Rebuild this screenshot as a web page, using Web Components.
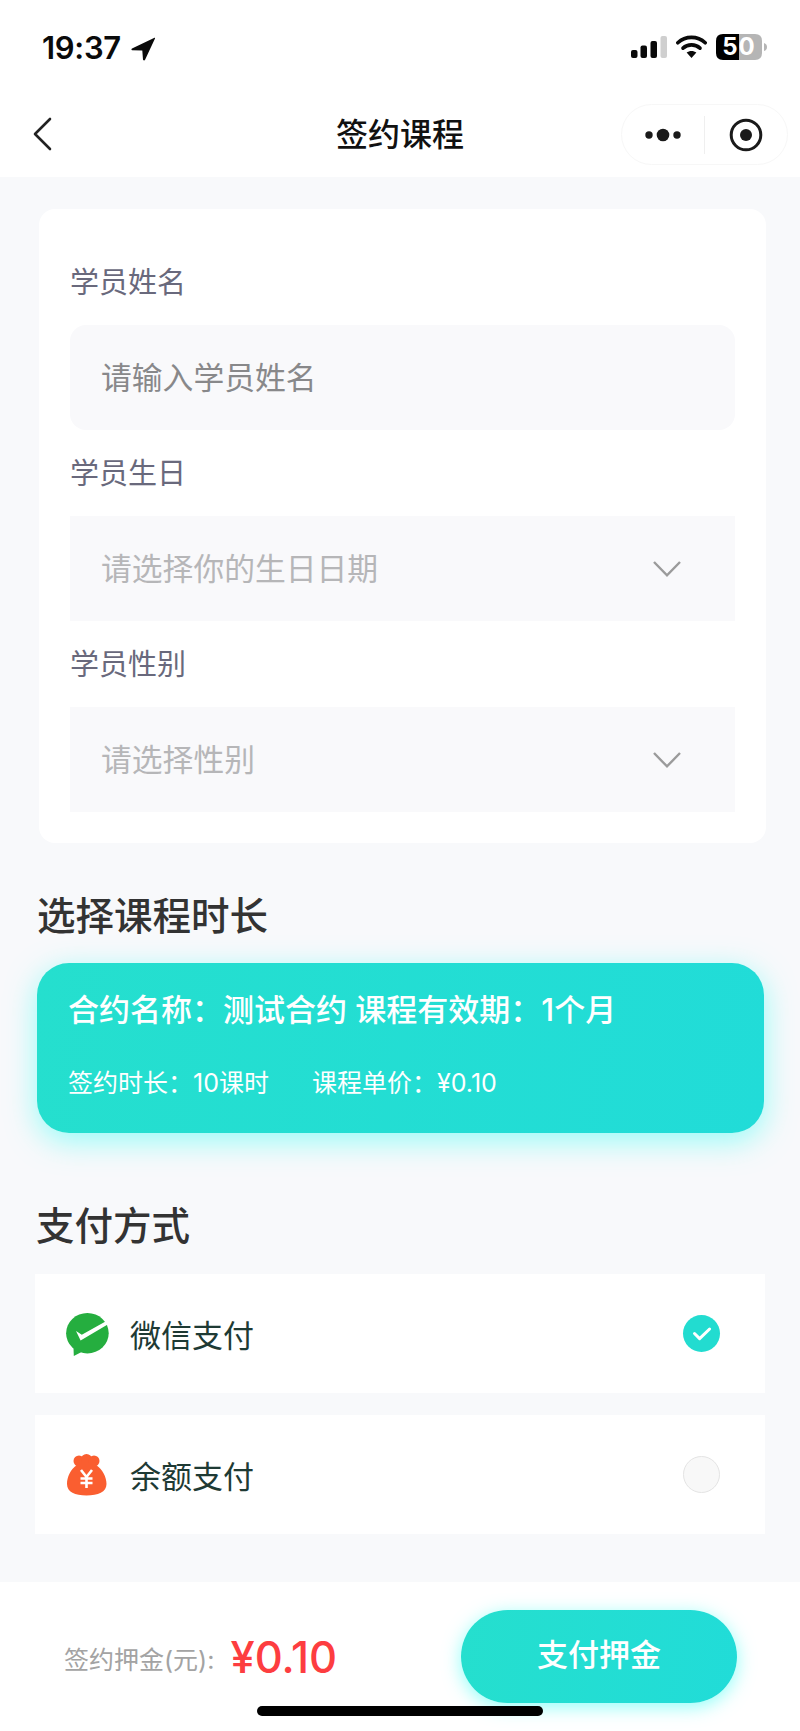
<!DOCTYPE html>
<html lang="zh-CN">
<head>
<meta charset="utf-8">
<title>签约课程</title>
<style>
  html, body { margin: 0; padding: 0; }
  body {
    width: 800px;
    height: 1731px;
    overflow: hidden;
    background: #f8f9fb;
    font-family: Inter, "Noto Sans CJK SC", sans-serif;
  }
  #page { display: flex; flex-direction: column; height: 1731px; position: relative; }
  #main { flex: 1; }
</style>
</head>
<body>
<div id="page">
  <status-bar></status-bar>
  <nav-bar>签约课程</nav-bar>
  <div id="main">
    <form-card>
      <form-field label="学员姓名" placeholder="请输入学员姓名"></form-field>
      <form-field label="学员生日" placeholder="请选择你的生日日期" select></form-field>
      <form-field label="学员性别" placeholder="请选择性别" select></form-field>
    </form-card>
    <section-title style="--top:49px;--left:37px;--bottom:29px">选择课程时长</section-title>
    <course-card name="合约名称：测试合约 课程有效期：1个月" duration="签约时长：10课时" price="课程单价：¥0.10"></course-card>
    <section-title style="--top:69px;--left:36px;--bottom:30px">支付方式</section-title>
    <pay-option icon="wechat" checked>微信支付</pay-option>
    <pay-option icon="balance">余额支付</pay-option>
  </div>
  <pay-footer></pay-footer>
  <home-bar></home-bar>
</div>

<script>
const statusTpl = document.createElement("template");
statusTpl.innerHTML = `
  <style>
    :host { display: flex; align-items: flex-start; height: 88px; background: #fff; box-sizing: border-box; padding: 33px 33px 0 42px; }
    .time { font: 600 31px/30px Inter, sans-serif; color: #0a0a0a; letter-spacing: -0.3px; }
    .loc { margin: 4px 0 0 10px; }
    .right { margin-left: auto; display: flex; align-items: flex-start; }
    .signal { margin-top: 3px; }
    .wifi { margin: 2px 0 0 9px; }
    .battery { margin: 1px 0 0 9px; width: 51px; height: 26px; position: relative; }
    .battery svg { position: absolute; left: 0; top: 0; }
    .battery span { position: absolute; left: 0; top: 0; width: 46px; height: 26px; text-align: center;
      font: 700 24px/26px Inter, sans-serif; color: #fff; letter-spacing: 1px; }
  </style>
  <span class="time">19:37</span>
  <svg class="loc" width="24" height="24" viewBox="0 0 24 24"><path d="M23.5 0.8 L1 11.6 Q-0.2 12.6 1 13.2 L11.3 13.6 L12 22.8 Q13.2 24.2 14.2 22.6 L24 1.6 Q24.2 0.4 23.5 0.8 Z" fill="#0a0a0a"/></svg>
  <div class="right">
    <svg class="signal" width="36" height="22" viewBox="0 0 36 22">
      <rect x="0" y="14" width="6.5" height="8" rx="2" fill="#0a0a0a"/>
      <rect x="9.5" y="9.5" width="6.5" height="12.5" rx="2" fill="#0a0a0a"/>
      <rect x="19.5" y="5" width="6.5" height="17" rx="2" fill="#0a0a0a"/>
      <rect x="29.5" y="0" width="6.5" height="22" rx="2" fill="#cfcfcf"/>
    </svg>
    <svg class="wifi" width="31" height="23" viewBox="0 0 31 23">
      <path d="M1.8 7.8 C9.5 0.6 21.5 0.6 29.2 7.8" fill="none" stroke="#0a0a0a" stroke-width="3.6" stroke-linecap="round"/>
      <path d="M7 13.2 C11.8 8.8 19.2 8.8 24 13.2" fill="none" stroke="#0a0a0a" stroke-width="3.6" stroke-linecap="round"/>
      <path d="M15.5 23 L10.6 17.6 C13.4 15.4 17.6 15.4 20.4 17.6 Z" fill="#0a0a0a"/>
    </svg>
    <div class="battery">
      <svg width="51" height="26" viewBox="0 0 51 26">
        <path d="M23 0 H39 Q46 0 46 7 V19 Q46 26 39 26 H23 Z" fill="#b5b5b5"/>
        <path d="M23 0 H7 Q0 0 0 7 V19 Q0 26 7 26 H23 Z" fill="#000"/>
        <path d="M48 9 Q51 10 51 13 Q51 16 48 17 Z" fill="#b5b5b5"/>
      </svg>
      <span>50</span>
    </div>
  </div>
`;
class StatusBar extends HTMLElement {
  constructor() {
    super();
    this.attachShadow({ mode: "open" });
    this.shadowRoot.appendChild(statusTpl.content.cloneNode(true));
  }
}
customElements.define("status-bar", StatusBar);

const navTpl = document.createElement("template");
navTpl.innerHTML = `
  <style>
    :host { display: flex; align-items: center; height: 89px; background: #fff; position: relative; }
    .back { margin: 2px 0 0 32px; flex: none; }
    .title { position: absolute; left: 0; right: 0; top: 26px; text-align: center; font: 500 32px/42px Inter, "Noto Sans CJK SC", sans-serif; color: #111; }
    .capsule { position: absolute; left: 621px; top: 16px; width: 167px; height: 61px; box-sizing: border-box;
      border: 1px solid #f7f7f7; border-radius: 31px; background: #fff; display: flex; align-items: center; }
    .capsule > div { flex: 1; display: flex; justify-content: center; align-items: center; }
    .line { width: 1px; height: 38px; background: #efefef; flex: none; }
  </style>
  <svg class="back" width="20" height="34" viewBox="0 0 20 34"><path d="M18 2 L3 17 L18 32" fill="none" stroke="#222" stroke-width="2.6" stroke-linecap="round" stroke-linejoin="round"/></svg>
  <div class="title"><slot></slot></div>
  <div class="capsule">
    <div><svg width="36" height="14" viewBox="0 0 36 14"><circle cx="4" cy="7" r="3.7" fill="#1a1a1a"/><circle cx="18" cy="7" r="6.3" fill="#1a1a1a"/><circle cx="32" cy="7" r="3.7" fill="#1a1a1a"/></svg></div>
    <span class="line"></span>
    <div><svg width="34" height="34" viewBox="0 0 34 34"><circle cx="17" cy="17" r="14.8" fill="none" stroke="#1a1a1a" stroke-width="3"/><circle cx="17" cy="17" r="6" fill="#1a1a1a"/></svg></div>
  </div>
`;
class NavBar extends HTMLElement {
  constructor() {
    super();
    this.attachShadow({ mode: "open" });
    this.shadowRoot.appendChild(navTpl.content.cloneNode(true));
  }
}
customElements.define("nav-bar", NavBar);

class FormCard extends HTMLElement {
  constructor() {
    super();
    this.attachShadow({ mode: "open" });
    this.shadowRoot.innerHTML = `
      <style>
        :host { display: block; margin: 32px 34px 0 39px; padding: 30px 31px 31px 31px; background: #fff; border-radius: 16px; }
      </style>
      <slot></slot>`;
  }
}
customElements.define("form-card", FormCard);

class FormField extends HTMLElement {
  constructor() {
    super();
    this.attachShadow({ mode: "open" });
  }
  connectedCallback() {
    const select = this.hasAttribute("select");
    this.shadowRoot.innerHTML = `
      <style>
        :host { display: block; }
        .label { height: 86px; box-sizing: border-box; padding: 0 0 4px 0; display: flex; align-items: center; font: 400 29px/40px "Noto Sans CJK SC", sans-serif; color: #69697c; }
        .box { height: 105px; box-sizing: border-box; padding: 0 53px 0 31px; background: #f9f9fb; display: flex; align-items: center; justify-content: space-between;
          font: 400 30.8px/40px "Noto Sans CJK SC", sans-serif; border-radius: ${select ? 0 : 16}px; color: ${select ? "#b6b6b8" : "#88888a"}; }
        .box span { padding-bottom: 3px; }
      </style>
      <div class="label">${this.getAttribute("label")}</div>
      <div class="box">
        <span>${this.getAttribute("placeholder")}</span>
        ${select ? `<svg width="30" height="18" viewBox="0 0 30 18"><path d="M2 2 L15 15.4 L28 2" fill="none" stroke="#9b9b9b" stroke-width="2.4"/></svg>` : ""}
      </div>`;
  }
}
customElements.define("form-field", FormField);

class SectionTitle extends HTMLElement {
  constructor() {
    super();
    this.attachShadow({ mode: "open" });
    this.shadowRoot.innerHTML = `
      <style>
        :host { display: block; padding: var(--top) 0 var(--bottom) var(--left); font: 500 38.5px/42px "Noto Sans CJK SC", sans-serif; color: #333; }
      </style>
      <slot></slot>`;
  }
}
customElements.define("section-title", SectionTitle);

class CourseCard extends HTMLElement {
  constructor() {
    super();
    this.attachShadow({ mode: "open" });
  }
  connectedCallback() {
    this.shadowRoot.innerHTML = `
      <style>
        :host { display: block; margin: 0 36px 0 37px; height: 170px; box-sizing: border-box; padding: 26px 31px 0; border-radius: 32px; color: #fff;
          background: linear-gradient(100deg, #25dfce, #21dcd8); box-shadow: 0 8px 30px rgba(70, 255, 245, 0.55); font-family: Inter, "Noto Sans CJK SC", sans-serif; }
        .name { font-size: 31px; line-height: 42px; font-weight: 500; white-space: nowrap; }
        .sub { margin-top: 35px; display: flex; gap: 43px; font-size: 25px; line-height: 34px; font-weight: 400; white-space: nowrap; }
      </style>
      <div class="name">${this.getAttribute("name")}</div>
      <div class="sub"><span>${this.getAttribute("duration")}</span><span>${this.getAttribute("price")}</span></div>`;
  }
}
customElements.define("course-card", CourseCard);

const payIcons = {
  wechat: `<svg width="43" height="43" viewBox="0 0 43 43">
      <ellipse cx="21.4" cy="20.2" rx="21.3" ry="20.2" fill="#25ae3f"/>
      <path d="M7.5 35 L7.8 43 L16.5 38.6 Z" fill="#25ae3f"/>
      <path d="M10 18 L15.8 21.8 L39.5 8.6 L42.5 11 L14.6 27.6 Z" fill="#fff"/>
    </svg>`,
  balance: `<svg width="43" height="43" viewBox="-1 0 43 43">
      <circle cx="12" cy="7" r="5.5" fill="#fa5e30"/><circle cx="19.5" cy="5.5" r="5.5" fill="#fa5e30"/><circle cx="27" cy="7" r="5.5" fill="#fa5e30"/>
      <path d="M11 9 H28 L29 11 C35.5 15 39.5 23 39.5 30 C39.5 38 31 41.5 19.5 41.5 C8 41.5 0 38 0 30 C0 23 3.5 15 10 11 Z" fill="#fa5e30"/>
      <path d="M14 16 L19.5 23 L25 16 M13.5 24.5 H25.5 M13.5 29 H25.5 M19.5 23 V34" fill="none" stroke="#fff" stroke-width="2.6"/>
    </svg>`
};

class PayOption extends HTMLElement {
  constructor() {
    super();
    this.attachShadow({ mode: "open" });
  }
  connectedCallback() {
    const checked = this.hasAttribute("checked");
    this.shadowRoot.innerHTML = `
      <style>
        :host { display: flex; align-items: center; height: 119px; margin: 0 35px 22px; padding: 0 45px 0 31px; background: #fff; }
        .icon { display: flex; flex: none; margin-top: 2px; }
        .text { margin-left: 21px; font: 400 31px/40px "Noto Sans CJK SC", sans-serif; color: #1e3a34; }
        .radio { margin-left: auto; width: 37px; height: 37px; box-sizing: border-box; border-radius: 50%; display: flex; align-items: center; justify-content: center; }
        .on { background: #22dcd0; }
        .off { background: #f8f8f8; border: 1.5px solid #e4e4e4; }
      </style>
      <span class="icon">${payIcons[this.getAttribute("icon")]}</span>
      <span class="text"><slot></slot></span>
      <span class="radio ${checked ? "on" : "off"}">${checked ? `<svg width="20" height="16" viewBox="0 0 20 16"><path d="M2.5 7.5 L7.6 12.6 L17.6 3" fill="none" stroke="#fff" stroke-width="3" stroke-linecap="round" stroke-linejoin="round"/></svg>` : ""}</span>`;
  }
}
customElements.define("pay-option", PayOption);

class PayFooter extends HTMLElement {
  constructor() {
    super();
    this.attachShadow({ mode: "open" });
    this.shadowRoot.innerHTML = `
      <style>
        :host { display: flex; align-items: flex-start; height: 149px; box-sizing: border-box; background: #fff; padding: 28px 63px 0 64px; }
        .label { margin-top: 32px; font: 400 25px/36px Inter, "Noto Sans CJK SC", sans-serif; color: #a3a3a3; white-space: nowrap; }
        .amount { margin: 20px 0 0 16px; font: 500 43.5px/54px Inter, sans-serif; color: #fd3d40; white-space: nowrap; }
        button { margin-left: auto; width: 276px; height: 93px; margin-top: 0; border: 0; border-radius: 47px; padding: 0 0 8px; color: #fff;
          font: 500 31px/40px "Noto Sans CJK SC", sans-serif; background: linear-gradient(100deg, #25dfce, #21dcd8); box-shadow: 0 4px 18px rgba(70, 255, 245, 0.6); }
      </style>
      <span class="label">签约押金(元):</span>
      <span class="amount">¥0.10</span>
      <button>支付押金</button>`;
  }
}
customElements.define("pay-footer", PayFooter);

class HomeBar extends HTMLElement {
  constructor() {
    super();
    this.attachShadow({ mode: "open" });
    this.shadowRoot.innerHTML = `
      <style>
        :host { display: block; position: absolute; left: 257px; top: 1706px; width: 286px; height: 10px; border-radius: 5px; background: #000; }
      </style>`;
  }
}
customElements.define("home-bar", HomeBar);
</script>
</body>
</html>
